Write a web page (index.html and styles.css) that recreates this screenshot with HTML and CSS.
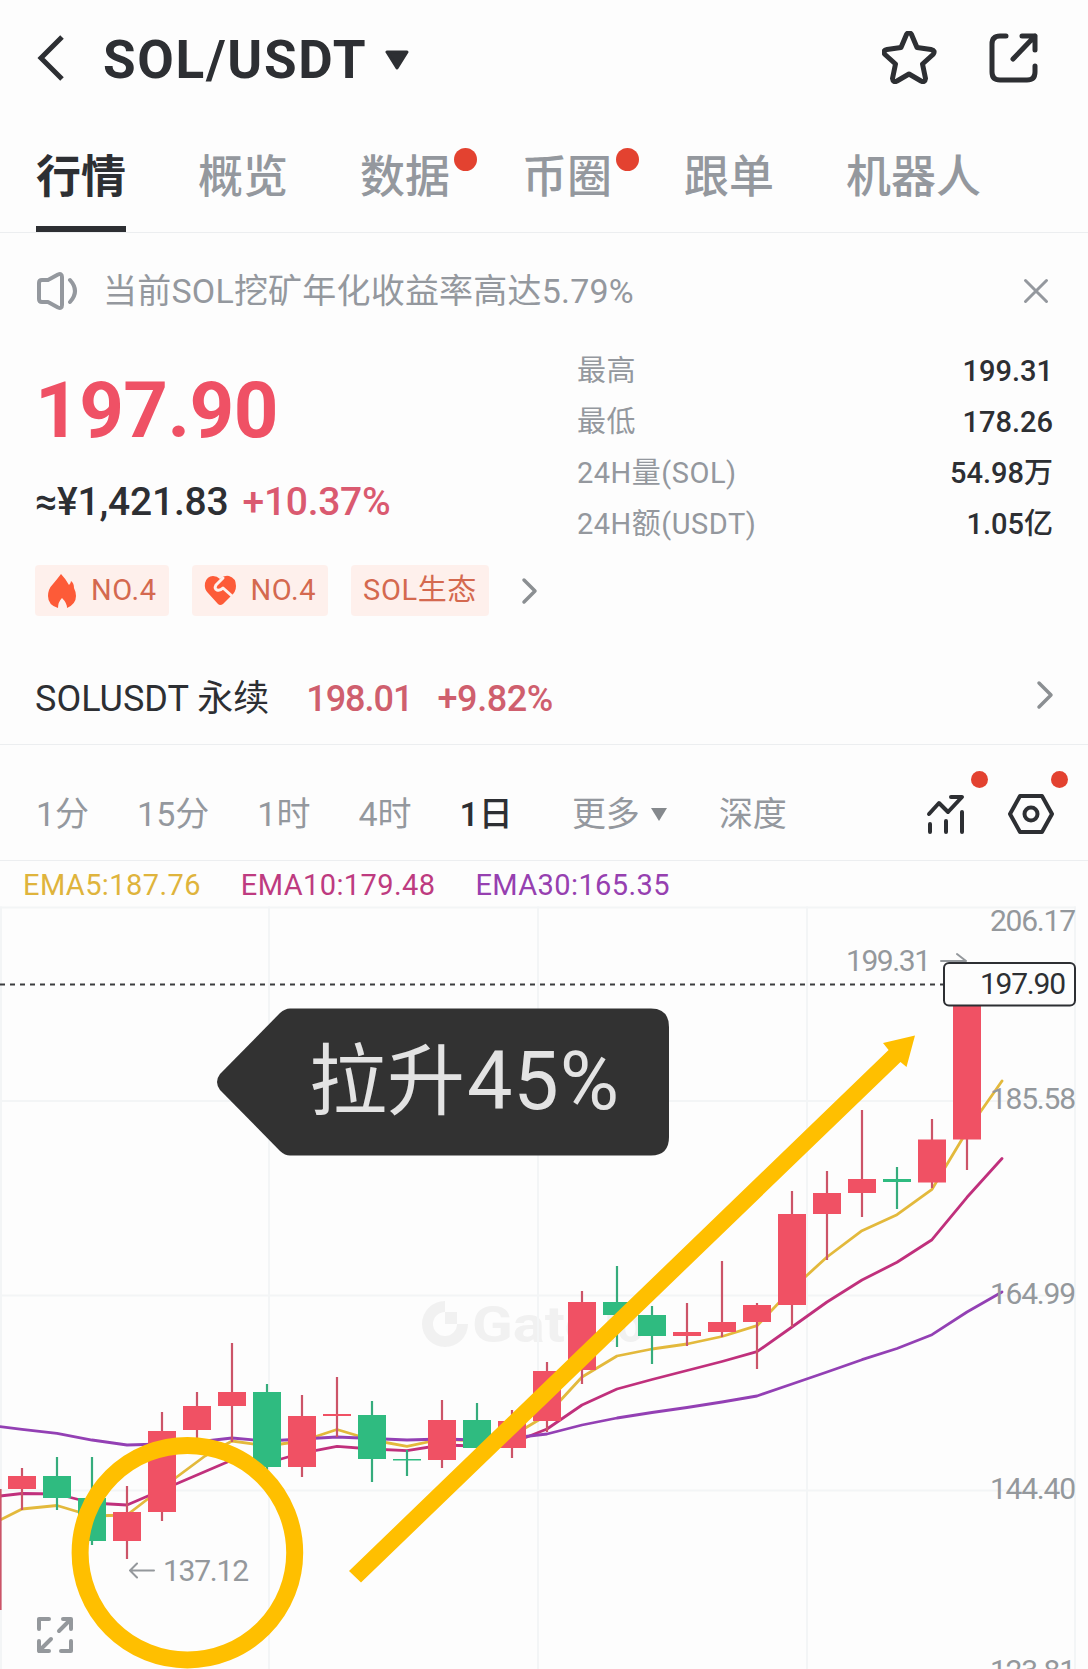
FILE: index.html
```html
<!DOCTYPE html>
<html lang="zh-CN">

<head>
    <meta charset="UTF-8">
    <title>SOL/USDT</title>
    <link rel="stylesheet" href="styles.css">
</head>

<body>
    <div class="page">

        <header class="header">
            <svg class="back" width="28" height="46" viewBox="0 0 28 46"><path d="M26 2 L5 23 L26 44" /></svg>
            <h1 class="pair">SOL/USDT</h1>
            <svg class="caret" width="24" height="20" viewBox="0 0 24 20"><path d="M2 2 H22 L12 18 Z" /></svg>
            <div class="actions">
                <svg width="56" height="54" viewBox="0 0 56 54"><path d="M24.500 3.500 Q27 0 29.500 3.500 L35 16.500 L49 18.500 Q54 19.500 51 23.500 L40.500 33 L43.500 47.500 Q43 52 39 50 L27 43 L15 50 Q11 52 10.500 47.500 L13.500 33 L3 23.500 Q0 19.500 5 18.500 L19 16.500 Z" /></svg>
                <svg width="50" height="50" viewBox="0 0 50 50"><path d="M17 3 H11 Q3 3 3 11 V39 Q3 47 11 47 H38 Q46 47 46 39 V33 M33 3 H46 V17 M46 3 L24 26" /></svg>
            </div>
        </header>

        <nav class="tabs">
            <a class="tab active">行情</a>
            <a class="tab">概览</a>
            <a class="tab">数据<i class="dot"></i></a>
            <a class="tab">币圈<i class="dot"></i></a>
            <a class="tab">跟单</a>
            <a class="tab">机器人</a>
        </nav>

        <div class="notice">
            <svg class="speaker" width="42" height="40" viewBox="0 0 42 40"><path d="M3 12 Q3 9 6 9 L12 9 L22 3.500 Q26 2 26 6 V34 Q26 38 22 36.500 L12 31 H6 Q3 31 3 28 Z M34 9 Q44 20 34 31" /></svg>
            <span class="notice-text">当前SOL挖矿年化收益率高达5.79%</span>
            <svg class="close" width="26" height="26" viewBox="0 0 26 26"><path d="M2.500 2.500 L23.500 23.500 M23.500 2.500 L2.500 23.500" /></svg>
        </div>

        <section class="quote">
            <div class="quote-left">
                <div class="price">197.90</div>
                <div class="sub"><span class="cny">≈¥1,421.83</span><span class="rate">+10.37%</span></div>
            </div>
            <dl class="stats">
                <div><dt>最高</dt><dd>199.31</dd></div>
                <div><dt>最低</dt><dd>178.26</dd></div>
                <div><dt>24H量(SOL)</dt><dd>54.98万</dd></div>
                <div><dt>24H额(USDT)</dt><dd>1.05亿</dd></div>
            </dl>
        </section>

        <div class="tags">
            <span class="tag">
                <svg width="30" height="36" viewBox="0 0 30 36"><path d="M14 1 Q18 5 22 12 Q24 10 24 8 Q27 10 27 15 Q29 19 29 23 Q29 31 20 35 Q20 30 15 25 Q11 29 11 35 Q1 32 1 23 Q1 16 6 11 Q11 5 14 1 Z" /></svg>
                NO.4
            </span>
            <span class="tag">
                <svg width="33" height="31" viewBox="0 0 33 31"><path d="M16 4 Q20 0 25 1 Q32 3 32 11 Q32 17 27 21 L19 29 Q16 31 14 29 L4 18 Q0 14 1 8 Q3 1 9 1 Q13 1 16 4 Z" /><path class="cut" d="M19 3 L12 10 Q10 14 13 15 Q16 16 19 13 L28 21" /></svg>
                NO.4
            </span>
            <span class="tag tag-text">SOL生态</span>
            <svg class="more" width="18" height="28" viewBox="0 0 18 28"><path d="M3 3 L14 14 L3 25" /></svg>
        </div>

        <div class="perp">
            <span class="perp-name">SOLUSDT 永续</span>
            <span class="perp-price">198.01</span>
            <span class="perp-rate">+9.82%</span>
            <svg class="go" width="20" height="30" viewBox="0 0 20 30"><path d="M4 3 L16 15 L4 27" /></svg>
        </div>

        <div class="periods">
            <span>1分</span>
            <span>15分</span>
            <span>1时</span>
            <span>4时</span>
            <span class="on">1日</span>
            <span class="drop">更多<svg width="18" height="15" viewBox="0 0 18 15"><path d="M1 1 H17 L9 14 Z" /></svg></span>
            <span>深度</span>
            <div class="tools">
                <div class="tool">
                    <svg width="40" height="42" viewBox="0 0 40 42"><path d="M3 21 L13 10 L22 19 L36 4 H25 M4 31 V39 M20 28 V39 M36 19 V39" /></svg>
                    <i class="dot"></i>
                </div>
                <div class="tool">
                    <svg width="46" height="42" viewBox="0 0 46 42"><path d="M12 3 H34 L44 21 L34 39 H12 L2 21 Z" /><circle cx="23" cy="21" r="6.500" /></svg>
                    <i class="dot"></i>
                </div>
            </div>
        </div>

        <div class="ema">
            <span class="ema5">EMA5:187.76</span>
            <span class="ema10">EMA10:179.48</span>
            <span class="ema30">EMA30:165.35</span>
        </div>

        <svg class="chart" width="1088" height="762" viewBox="0 907 1088 762">
            <!-- watermark -->
            <g class="mark">
                <path d="M445 1301 A23 23 0 1 0 468 1324 H457 A12 12 0 1 1 445 1312 Z M445 1312 H457 V1324 H445 Z" />
                <text x="472" y="1342" textLength="93" lengthAdjust="spacingAndGlyphs">Gat</text>
                <text x="565" y="1342" textLength="79" lengthAdjust="spacingAndGlyphs">e.io</text>
            </g>

            <!-- grid -->
            <path class="grid" d="M0 907.500H1075 M0 1101H1075 M0 1295.500H1075 M0 1490.500H1075 M1 907V1669 M269 907V1669 M538 907V1669 M807 907V1669 M1075 907V1669" />

            <!-- moving averages -->
            <polyline class="ma ma5" points="0,1520 22,1509 57,1505.5 92,1516 127,1515 162,1488 205,1456 232,1441 267,1446 302,1441 337,1429.500 372,1440 407,1446.300 442,1439 477,1441 512,1436 547,1415 582,1377 617,1356 652,1349 687,1344 722,1336.500 757,1325.700 792,1289 827,1257 862,1230.700 897,1214.700 932,1189.300 967,1131 1002,1081" />
            <polyline class="ma ma10" points="0,1496 22,1493.500 57,1494 92,1503 127,1505 162,1490 197,1475 232,1460 267,1463 302,1453 337,1446.300 372,1449 407,1450.700 442,1445 477,1446 512,1443 547,1429 582,1405 617,1389 652,1379.500 687,1370.500 722,1361.500 757,1351.700 792,1327 827,1302 862,1280 897,1262.300 932,1239.700 967,1197.300 1002,1158.500" />
            <polyline class="ma ma30" points="0,1426.700 22,1429.300 57,1433.300 92,1440 127,1445 162,1444 197,1442 232,1438 267,1441 302,1439 337,1437 372,1438.500 407,1440 442,1439 477,1440 512,1438 547,1434 582,1425 617,1418 652,1412.500 687,1407.500 722,1402 757,1396 792,1384 827,1372 862,1359.700 897,1348.500 932,1334.700 967,1312 1002,1292" />

            <!-- candles -->
            <path class="wick up" d="M0.500 1489V1610 M22 1468V1510 M127 1486V1559 M162 1412V1521 M197 1392V1440 M232 1343V1442 M302 1395V1477 M337 1377V1437 M442 1400V1468 M512 1410V1458 M547 1362V1432 M582 1291V1384 M687 1303V1346 M722 1261V1337 M757 1303V1369 M792 1191V1327 M827 1171V1260 M862 1110V1217 M932 1119V1188 M967 1000V1170" />
            <path class="wick down" d="M57 1457V1510 M92 1457V1545 M267 1384V1470 M372 1401V1482 M407 1450V1476 M477 1403V1448 M617 1266V1347 M652 1306V1364 M897 1167V1209" />
            <path class="body up" d="M8 1476h28v13h-28z M113 1512h28v29h-28z M148 1431h28v81h-28z M183 1406h28v24h-28z M218 1392h28v14h-28z M288 1416h28v51h-28z M323 1414h28v2h-28z M428 1420h28v40h-28z M498 1421h28v27h-28z M533 1371h28v50h-28z M568 1302h28v68h-28z M673 1332h28v4h-28z M708 1322h28v10h-28z M743 1305h28v17h-28z M778 1214h28v91h-28z M813 1193h28v21h-28z M848 1179h28v14h-28z M918 1139.500h28v43h-28z M953 1000h28v139.500h-28z" />
            <path class="body down" d="M43 1476h28v22h-28z M78 1498h28v43h-28z M253 1392h28v75h-28z M358 1415h28v44h-28z M393 1459h28v1.500h-28z M463 1420h28v28h-28z M603 1302h28v13h-28z M638 1315h28v21h-28z M883 1179h28v3h-28z" />

            <!-- axis -->
            <g class="axis">
                <text x="990" y="931" textLength="86">206.17</text>
                <text x="990" y="1109" textLength="86">185.58</text>
                <text x="990" y="1304" textLength="86">164.99</text>
                <text x="990" y="1499" textLength="86">144.40</text>
                <text x="990" y="1681" textLength="86">123.81</text>
                <text x="846" y="971" textLength="85">199.31</text>
                <text x="163" y="1581" textLength="86">137.12</text>
            </g>
            <path class="pointer" d="M941 961H966 M957 954L966 961 M154 1570.500H130 M137 1563.500L130 1570.500L137 1577.500" />

            <!-- last price -->
            <path class="last-line" d="M0 984.500H943" />
            <rect class="last-box" x="944" y="963" width="131" height="42.500" rx="5" />
            <text class="last" x="980" y="994" textLength="86">197.90</text>

            <!-- expand -->
            <path class="expand" d="M39 1629V1619H49 M63 1619H71V1629 M71 1619L59 1631 M39 1641V1651H49 M39 1651L51 1639 M71 1641V1651H61" />

            <!-- drawn notes -->
            <path class="callout" d="M290 1008.500H651Q669 1008.500 669 1027V1137Q669 1155.500 651 1155.500H290Q285 1155.500 280 1151L220 1090Q214 1082 220 1074L280 1013Q285 1008.500 290 1008.500Z" />
            <text class="callout-text" x="309" y="1109"><tspan class="zh">拉升</tspan><tspan x="467" textLength="152">45%</tspan></text>
            <path class="arrow" d="M349 1571L888.600 1050L883 1043L915 1035.500L906.500 1067L900.500 1062L361 1582.500Z" />
            <circle class="ring" cx="187.400" cy="1552.700" r="107.300" />
        </svg>

    </div>
</body>

</html>
```
FILE: styles.css
```css
* {
    margin: 0;
    padding: 0;
    box-sizing: border-box;
}

body {
    background: #fdfdfd;
    color: #2d2f33;
    font-family: Roboto, "Noto Sans CJK SC", sans-serif;
    overflow: hidden;
}

svg {
    display: block;
    flex: none;
    fill: none;
    stroke-linecap: round;
    stroke-linejoin: round;
}

.page {
    width: 1088px;
    height: 1669px;
    overflow: hidden;
}

/* header */
.header {
    display: flex;
    align-items: center;
    height: 116px;
    padding: 0 49px 0 36px;
}

.back {
    stroke: #2d2f33;
    stroke-width: 5;
    stroke-linecap: butt;
    stroke-linejoin: miter;
}

.pair {
    width: 282px;
    margin-left: 39px;
    font-size: 53px;
    font-weight: 700;
    line-height: 60px;
    letter-spacing: 1.7px;
    padding-top: 3px;
}

.caret {
    margin-top: 3px;
    fill: #2d2f33;
    stroke: #2d2f33;
    stroke-width: 3;
}

.actions {
    display: flex;
    align-items: center;
    gap: 51px;
    margin-left: auto;
    stroke: #2d2f33;
    stroke-width: 5;
}

/* tabs */
.tabs {
    display: flex;
    gap: 72px;
    height: 117px;
    padding-left: 36px;
    border-bottom: 1px solid #eceef0;
}

.tab {
    position: relative;
    height: 116px;
    font-size: 45px;
    font-weight: 500;
    line-height: 124px;
    color: #94989e;
}

.tab.active {
    color: #2d2f33;
    font-weight: 700;
    border-bottom: 6px solid #2d2f33;
}

.dot {
    position: absolute;
    border-radius: 50%;
    background: #e34230;
}

.tab .dot {
    top: 32px;
    right: -27px;
    width: 23px;
    height: 23px;
}

/* notice */
.notice {
    display: flex;
    align-items: center;
    height: 112px;
    padding: 4px 39px 0 36px;
    color: #94989e;
    stroke: #94989e;
}

.speaker {
    stroke-width: 4;
}

.notice-text {
    margin-left: 25px;
    font-size: 34px;
    letter-spacing: 0.2px;
    line-height: 50px;
    stroke: none;
}

.close {
    margin-left: auto;
    stroke-width: 3;
}

/* quote */
.quote {
    display: flex;
    justify-content: space-between;
    height: 220px;
    padding: 0 35px 0 35px;
}

.price {
    height: 130px;
    line-height: 132px;
    font-size: 78px;
    font-weight: 700;
    letter-spacing: -0.6px;
    color: #ef5165;
}

.sub {
    display: flex;
    gap: 14px;
    font-size: 39px;
    font-weight: 500;
    line-height: 54px;
    letter-spacing: -0.2px;
}

.rate {
    color: #da5a70;
    letter-spacing: -0.3px;
}

.stats {
    width: 476px;
}

.stats div {
    display: flex;
    justify-content: space-between;
    height: 51px;
    line-height: 53px;
    font-size: 29px;
}

.stats dt {
    color: #94989e;
    letter-spacing: 0.5px;
}

.stats dd {
    font-weight: 500;
}

/* tags */
.tags {
    display: flex;
    align-items: center;
    height: 51px;
    padding-left: 35px;
}

.tag {
    display: flex;
    align-items: center;
    height: 51px;
    margin-right: 23px;
    padding: 0 12px;
    border-radius: 4px;
    background: #fef0ec;
    color: #d4694f;
    font-size: 29px;
    line-height: 51px;
    letter-spacing: 0.6px;
}

.tag svg {
    margin-right: 14px;
    fill: #fd5b38;
}

.tag .cut {
    fill: none;
    stroke: #fef0ec;
    stroke-width: 3;
}

.more {
    margin-left: 9px;
    stroke: #8b8f92;
    stroke-width: 3.5;
}

/* perpetual */
.perp {
    display: flex;
    align-items: center;
    height: 129px;
    padding: 36px 33px 0 35px;
    border-bottom: 1px solid #eceef0;
    font-size: 36px;
    line-height: 50px;
}

.perp-name {
    padding-top: 2px;
}

.perp-price {
    margin-left: 37px;
    padding-top: 2px;
    font-weight: 500;
    letter-spacing: -1px;
    color: #cf5f6e;
}

.perp-rate {
    margin-left: 25px;
    padding-top: 2px;
    font-weight: 500;
    letter-spacing: -0.4px;
    color: #cf5f6e;
}

.go {
    margin: -6px 0 0 auto;
    stroke: #8b8f92;
    stroke-width: 3.5;
}

/* periods */
.periods {
    display: flex;
    align-items: center;
    gap: 48px;
    height: 116px;
    padding: 23px 34px 0 36px;
    border-bottom: 1px solid #eceef0;
    font-size: 34px;
    color: #94989e;
}

.periods > span {
    line-height: 50px;
}

.periods .on {
    color: #2d2f33;
    font-weight: 500;
}

.drop {
    display: flex;
    align-items: center;
    gap: 10px;
    margin: 0 3px 0 11px;
}

.drop svg {
    fill: #85898d;
}

.tools {
    display: flex;
    gap: 42px;
    margin-left: auto;
    stroke: #2d2f33;
    stroke-width: 4;
}

.tool {
    position: relative;
}

.tool .dot {
    top: -22px;
    right: -22px;
    width: 17px;
    height: 17px;
}

.tool:last-child .dot {
    right: -14px;
}

/* ema legend */
.ema {
    display: flex;
    gap: 40px;
    height: 46px;
    padding-left: 23px;
    font-size: 29px;
    line-height: 48px;
    letter-spacing: 0.4px;
}

.ema5 {
    color: #dfb43c;
}

.ema10 {
    color: #be3b80;
}

.ema30 {
    color: #9640b0;
}

/* chart */
.chart {
    overflow: visible;
}

.chart text {
    font-size: 30px;
}

.grid {
    stroke: #f3f5f6;
    stroke-width: 2;
}

.mark {
    fill: #f1f1f1;
}

.chart .mark text {
    font-size: 50px;
    font-weight: 700;
}

.ma {
    stroke-width: 2.8;
}

.ma5 {
    stroke: #e3b93c;
}

.ma10 {
    stroke: #c0307c;
}

.ma30 {
    stroke: #9340b4;
}

.wick {
    stroke-width: 2.2;
    stroke-linecap: butt;
}

.wick.up {
    stroke: #cc5468;
}

.wick.down {
    stroke: #35ac7c;
}

.body.up {
    fill: #f05164;
}

.body.down {
    fill: #2fbb80;
}

.axis {
    fill: #94989c;
}

.pointer {
    stroke: #94989c;
    stroke-width: 2;
}

.last-line {
    stroke: #3b3c3e;
    stroke-width: 2;
    stroke-dasharray: 5 5;
    stroke-linecap: butt;
}

.last-box {
    fill: #fdfdfd;
    stroke: #2d2f33;
    stroke-width: 2;
}

.last {
    fill: #2d2f33;
}

.expand {
    stroke: #94989c;
    stroke-width: 4;
}

.callout {
    fill: #323232;
}

.chart .callout-text {
    fill: #e3e3e3;
    font-size: 81px;
}

.chart .callout-text .zh {
    font-size: 78px;
}

.arrow {
    fill: #ffbf00;
}

.ring {
    stroke: #ffbf00;
    stroke-width: 17;
}
```
